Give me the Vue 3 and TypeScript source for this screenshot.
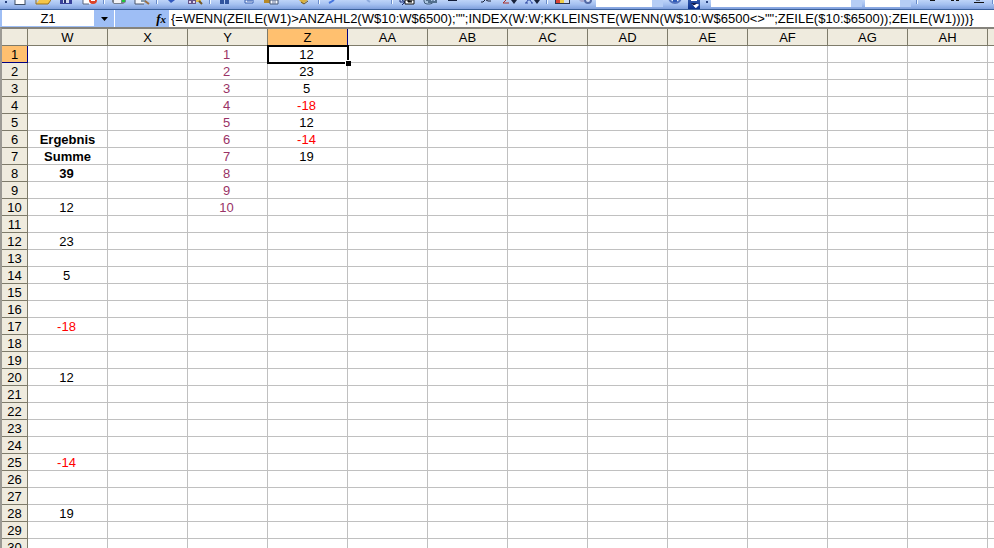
<script setup lang="ts">
import { ref } from 'vue'

interface Tool {
  label: string
  art?: string
  wide?: boolean
}

interface Cell {
  text: string
  bold?: boolean
  numeric?: boolean
  tone?: 'plum' | 'red'
}

const standardTools: Tool[][] = [
  [
    { label: 'Neu', art: '<path d="M3 0h10v4H3z" fill="#fff"/><path d="M3 0v4M13 0v4M2.500 4.500h11" stroke="#3f4f66" fill="none"/>' },
    { label: 'Öffnen', art: '<path d="M1 4 4 0h12l-3 4z" fill="#f5c648"/><path d="M1 0v4h12l3-4" stroke="#98701c" fill="none"/>' },
    { label: 'Speichern', art: '<path d="M2 0h12v4H2z" fill="#38419b"/><path d="M5 0h6v3H5z" fill="#d5dcf0"/><path d="M6 0h2v3H6z" fill="#26306e"/>' },
    { label: 'Berechtigung', art: '<path d="M2 0h8v4H2z" fill="#fff"/><path d="M2 0v4h6" stroke="#5b6780" fill="none"/><circle cx="12" cy="0" r="4" fill="#dd4326"/><path d="M10 0h4v1h-4z" fill="#fff"/>' },
  ],
  [
    { label: 'Drucken', art: '<path d="M1 0h14v2l-3 2H3L1 2z" fill="#78808e"/><path d="M3 0h7v3H3z" fill="#f2f3f6"/><path d="M11 0h3v2h-3z" fill="#20c83a"/>' },
    { label: 'Seitenansicht', art: '<path d="M1 0h9v4H1z" fill="#f5f7fc"/><path d="M1 0v4h9" stroke="#49556d" fill="none"/><path d="M7 0h5v2H7z" fill="#8499ac"/><path d="m11 1 4 3" stroke="#9c7043" stroke-width="2"/>' },
  ],
  [
    { label: 'Rechtschreibung', art: '<path d="m4 0 3 3 4-3z" fill="#3158bd"/>' },
    { label: 'Recherchieren', art: '<path d="M1 0h8v4H1z" fill="#665589"/><path d="M2 1h2v2H2zM6 1h2v2H6z" fill="#e4d8ef"/><path d="M9 0h5v2H9z" fill="#dfc35a"/><path d="m12 1 3 3" stroke="#735728" stroke-width="2"/>' },
  ],
  [
    { label: 'Ausschneiden', art: '<path d="M4 0v3h2V0m3 0v3h2V0" stroke="#31549e" stroke-width="2" fill="none"/>' },
    { label: 'Kopieren', art: '<path d="M5 0h8v3H5z" fill="#eef4ff" stroke="#3860b2"/><path d="M7 1h5" stroke="#3860b2"/>' },
    { label: 'Einfügen', wide: true, art: '<path d="M1 0h9v3H1z" fill="#b78928"/><path d="M7 0h8v4H7z" fill="#f9fbff" stroke="#455775"/><path d="M9 1h4M9 3h4" stroke="#66799e"/>' },
    { label: 'Format übertragen', art: '<path d="m3 0 4 4 5-4z" fill="#d9b13f"/><path d="m5 2 3 2 4-3" stroke="#695529" fill="none"/>' },
  ],
  [
    { label: 'Rückgängig', wide: true, art: '<path d="M8 0 5 2 3 3" stroke="#4675df" stroke-width="2" fill="none"/>' },
    { label: 'Wiederholen', wide: true, art: '<path d="m8 0 3 2" stroke="#8ca9dc" stroke-width="2" fill="none"/>' },
  ],
  [
    { label: 'Zellen verschieben', art: '<path d="M1 0v2h4M3 0l3 2-3 3" stroke="#182c74" fill="none"/><path d="M6 0h9v4H6z" fill="#fff" stroke="#111"/><path d="M9 0v2h4M10 1h3" stroke="#111" stroke-width="1"/>' },
    { label: 'Hyperlink', art: '<rect x="2" y="-3" width="9" height="7" rx="3" fill="#aac5df" stroke="#415c7a"/><path d="M6 2h8V0M4 0h5" stroke="#526f8d" stroke-width="2" fill="none"/>' },
    { label: 'AutoSumme', wide: true, art: '<path d="M3 0h9v1H3z" fill="#101b37"/>' },
    { label: 'Funktion', art: '<path d="M3 2h2l2-2m1 0 2 1h3" stroke="#182139" stroke-width="1" fill="none"/>' },
    { label: 'Aufsteigend sortieren', art: '<path d="M5 0 2 3h6" stroke="#a9302b" stroke-width="1" fill="none"/><path d="M10 0h6l-3 4z" fill="#18223a"/>' },
    { label: 'Absteigend sortieren', art: '<path d="m2 3 2-3h2l2 3M1 3h3m3 0h2" stroke="#304ba4" fill="none"/><path d="M10 0h6l-3 4z" fill="#18223a"/>' },
  ],
  [
    { label: 'Diagramm-Assistent', art: '<path d="M1 0h15v4H1z" fill="#283452"/><path d="M2 0h4v3H2z" fill="#d94335"/><path d="M6 0h4v3H6z" fill="#f0ce47"/><path d="M10 0h5v3h-5z" fill="#d3def2"/>' },
    { label: 'Zeichnen', art: '<path d="M2 0h5v2H4z" fill="#a5a8cf"/><circle cx="11" cy="0" r="3" fill="#d9e3fa" stroke="#5269a5" stroke-width="2"/>' },
  ],
]

const formatTools: Tool[] = [
  { label: 'Fett', art: '<path d="M6 0h5v1H6z" fill="#111"/>' },
  { label: 'Kursiv', art: '<path d="M4 0h3v1H4zM9 0h3v1H9z" fill="#111"/>' },
  { label: 'Unterstrichen', art: '<path d="M6 0h4M4 2.500h10" stroke="#111" fill="none"/>' },
]

const columns = ['W', 'X', 'Y', 'Z', 'AA', 'AB', 'AC', 'AD', 'AE', 'AF', 'AG', 'AH', '']
const rows = Array.from({ length: 30 }, (_, i) => i + 1)

const cells: Record<string, Cell> = {
  W6: { text: 'Ergebnis', bold: true },
  W7: { text: 'Summe', bold: true },
  W8: { text: '39', bold: true, numeric: true },
}

function fill(column: string, entries: [number, number][]) {
  for (const [row, value] of entries) {
    cells[column + row] = { text: String(value), numeric: true, tone: value < 0 ? 'red' : undefined }
  }
}

fill('W', [[10, 12], [12, 23], [14, 5], [17, -18], [20, 12], [25, -14], [28, 19]])
fill('Z', [[1, 12], [2, 23], [3, 5], [4, -18], [5, 12], [6, -14], [7, 19]])
for (let n = 1; n <= 10; n++) cells['Y' + n] = { text: String(n), numeric: true, tone: 'plum' }

const activeColumn = ref('Z')
const activeRow = ref(1)
const address = ref('Z1')
const formula = ref(
  '{=WENN(ZEILE(W1)>ANZAHL2(W$10:W$6500);"";INDEX(W:W;KKLEINSTE(WENN(W$10:W$6500<>"";ZEILE($10:$6500));ZEILE(W1))))}',
)

function isActive(column: string, row: number) {
  return column === activeColumn.value && row === activeRow.value
}

function cellClass(column: string, row: number) {
  const cell = cells[column + row]
  return [cell?.tone, { bold: cell?.bold, numeric: cell?.numeric, active: isActive(column, row) }]
}
</script>

<template>
  <main class="app">
    <div class="toolbar">
      <span class="grip"></span>
      <template v-for="(group, g) in standardTools" :key="g">
        <span v-if="g > 0" class="separator"></span>
        <button
          v-for="tool in group"
          :key="tool.label"
          type="button"
          class="tool"
          :class="{ wide: tool.wide }"
          :aria-label="tool.label"
        >
          <svg viewBox="0 0 16 5" width="16" height="5" v-html="tool.art"></svg>
        </button>
      </template>
      <select class="combo zoom" aria-label="Zoom"></select>
      <button type="button" class="tool" aria-label="Hilfe">
        <svg viewBox="0 0 16 5" width="16" height="5">
          <circle cx="8" cy="-3" r="6" fill="#e9f2ff" stroke="#5272bd" stroke-width="2" />
          <path d="M6 0h4v2H6z" fill="#2e59b8" />
        </svg>
      </button>
      <button type="button" class="overflow" aria-label="Symbolleistenoptionen">
        <svg viewBox="0 0 12 9" width="12" height="9">
          <path d="M3 0h6v1H3zM4 4h7L7.500 8z" fill="#fff" />
          <path d="M3 3h6L6 6z" fill="#101f50" />
          <path d="M5 5h6L8 8z" fill="#fff" />
        </svg>
      </button>
      <span class="grip second"></span>
      <select class="combo font" aria-label="Schriftart"></select>
      <select class="combo size" aria-label="Schriftgrad"></select>
      <span class="separator"></span>
      <button v-for="tool in formatTools" :key="tool.label" type="button" class="tool" :aria-label="tool.label">
        <svg viewBox="0 0 16 5" width="16" height="5" v-html="tool.art"></svg>
      </button>
      <span class="separator"></span>
    </div>

    <div class="formula-bar">
      <input v-model="address" class="name-box" type="text" aria-label="Namenfeld" />
      <button type="button" class="name-arrow" aria-label="Namen anzeigen">
        <svg viewBox="0 0 7 4" width="7" height="4"><path d="M0 0h7L3.500 4z" fill="#000" /></svg>
      </button>
      <div class="fx-area">
        <button type="button" class="fx" aria-label="Funktion einfügen">f<span class="fx-x">x</span></button>
      </div>
      <input v-model="formula" class="formula" type="text" aria-label="Bearbeitungsleiste" spellcheck="false" />
    </div>

    <div class="sheet">
      <table class="grid">
        <colgroup>
          <col class="row-col" />
          <col v-for="column in columns" :key="column" class="data-col" />
        </colgroup>
        <thead>
          <tr>
            <th class="corner"></th>
            <th v-for="column in columns" :key="column" scope="col" :class="{ current: column === activeColumn }">
              {{ column }}
            </th>
          </tr>
        </thead>
        <tbody>
          <tr v-for="row in rows" :key="row">
            <th scope="row" :class="{ current: row === activeRow }">{{ row }}</th>
            <td v-for="column in columns" :key="column" :class="cellClass(column, row)">
              {{ cells[column + row]?.text }}
              <span v-if="isActive(column, row)" class="selection"><span class="handle"></span></span>
            </td>
          </tr>
        </tbody>
      </table>
    </div>
  </main>
</template>

<style>
html,
body {
  margin: 0;
  height: 100%;
  overflow: hidden;
}

#app {
  height: 100%;
}
</style>

<style scoped>
.app {
  display: flex;
  flex-direction: column;
  height: 100%;
  overflow: hidden;
  background: #fff;
  color: #000;
  font-family: 'Liberation Sans', Arial, sans-serif;
  font-size: 13px;
}

button,
input,
select {
  box-sizing: border-box;
  margin: 0;
  padding: 0;
  border: 0;
  border-radius: 0;
  background: none;
  color: inherit;
  font: inherit;
  outline: none;
}

svg {
  display: block;
  flex: none;
}

.toolbar {
  display: flex;
  flex: none;
  height: 9px;
  overflow: hidden;
  border-bottom: 1px solid #3b619c;
  background: linear-gradient(#bed4f8, #a4c0f0 50%, #7f9fdc);
}

.grip {
  flex: none;
  width: 2px;
  height: 2px;
  margin: 1px 1px 0 5px;
  background: #27417f;
}

.grip.second {
  margin: 1px 3px 0 6px;
}

.tool {
  display: flex;
  flex: none;
  width: 23px;
  height: 9px;
  padding-left: 4px;
}

.tool.wide {
  width: 33px;
}

.separator {
  flex: none;
  box-sizing: border-box;
  width: 7px;
  height: 4px;
  border-left: 3px solid transparent;
  background: linear-gradient(90deg, #6a8ccb 1px, #f1f9ff 1px, #f1f9ff 2px, transparent 2px) no-repeat;
}

.combo {
  flex: none;
  height: 7px;
  appearance: none;
  border-right: 11px solid #b5cdf5;
  background: #fff;
}

.zoom {
  width: 67px;
}

.font {
  width: 151px;
  margin-right: 3px;
}

.size {
  width: 46px;
  margin-right: 2px;
}

.overflow {
  flex: none;
  width: 12px;
  height: 9px;
  margin-left: 2px;
  background: linear-gradient(#2e55a8, #0b3290);
}

.formula-bar {
  display: flex;
  flex: none;
  height: 17px;
  padding-left: 2px;
  background: #9ebef5;
}

.name-box {
  width: 92px;
  height: 16px;
  background: #fff;
  text-align: center;
}

.name-arrow {
  display: flex;
  flex: none;
  align-items: center;
  justify-content: center;
  width: 20px;
}

.fx-area {
  display: flex;
  flex: none;
  justify-content: flex-end;
  box-sizing: border-box;
  width: 55px;
  padding-right: 3px;
  border-left: 1px solid #fff;
}

.fx {
  font: italic bold 13px/16px 'Liberation Serif', serif;
}

.fx-x {
  font-size: 11px;
}

.formula {
  flex: 1;
  min-width: 0;
  padding-left: 2px;
  background: #fff;
}

.sheet {
  flex: 1;
  min-height: 0;
  overflow: hidden;
  border-top: 2px solid #85837c;
  border-left: 2px solid #9c9a94;
}

.grid {
  width: 1066px;
  table-layout: fixed;
  border-collapse: separate;
  border-spacing: 0;
}

.row-col {
  width: 26px;
}

.data-col {
  width: 80px;
}

.grid th,
.grid td {
  box-sizing: border-box;
  height: 17px;
  padding: 2px 0 0;
  overflow: hidden;
  border-right: 1px solid #c0c0c0;
  border-bottom: 1px solid #c0c0c0;
  font-size: 13px;
  font-weight: normal;
  line-height: 14px;
  text-align: center;
  white-space: nowrap;
}

.grid th {
  border-color: #7e7b6a;
  background: #efebde;
}

.grid th.current {
  border-color: #000080;
  background: #ffc06f;
}

.grid td.numeric {
  padding-right: 2px;
}

.grid td.bold {
  font-weight: bold;
}

.grid td.plum {
  color: #993366;
}

.grid td.red {
  color: #f00;
}

.grid td.active {
  position: relative;
  overflow: visible;
}

.selection {
  position: absolute;
  inset: -1px -2px -2px -1px;
  border: 2px solid #000;
}

.handle {
  position: absolute;
  right: -4px;
  bottom: -4px;
  width: 5px;
  height: 5px;
  border-top: 1px solid #fff;
  border-left: 1px solid #fff;
  background: #000;
}
</style>
